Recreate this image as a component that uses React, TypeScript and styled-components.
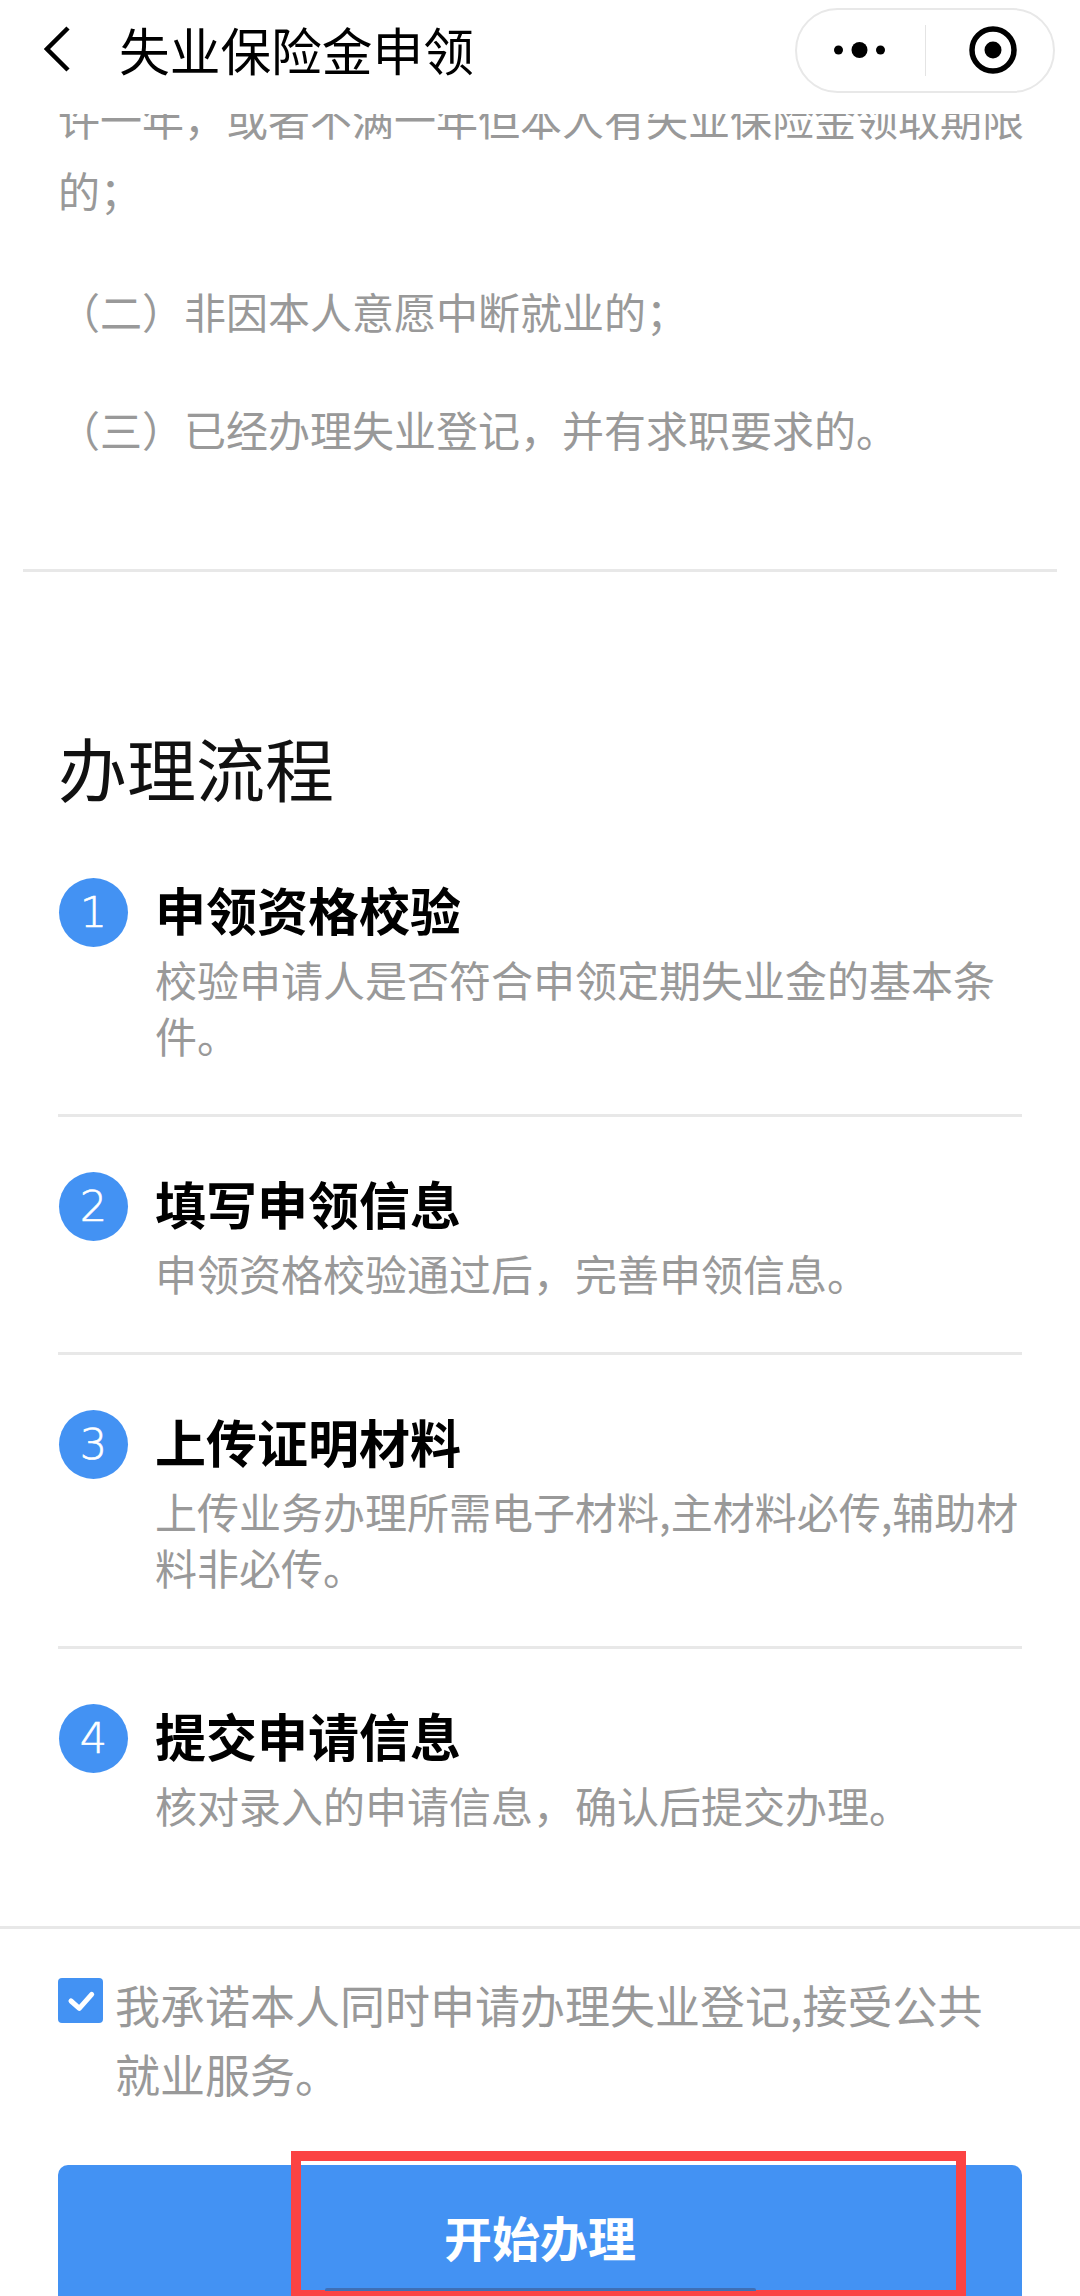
import React from "react"
import styled, { createGlobalStyle } from "styled-components"

const steps = [
  { title: "申领资格校验", desc: "校验申请人是否符合申领定期失业金的基本条件。" },
  { title: "填写申领信息", desc: "申领资格校验通过后，完善申领信息。" },
  { title: "上传证明材料", desc: "上传业务办理所需电子材料,主材料必传,辅助材料非必传。" },
  { title: "提交申请信息", desc: "核对录入的申请信息，确认后提交办理。" },
]

const GlobalStyle = createGlobalStyle`
  html, body {
    margin: 0;
    padding: 0;
    background: #fff;
  }
  body {
    font-family: "Noto Sans CJK SC", "Noto Sans", sans-serif;
  }
`

export default function App() {
  return (
    <S.Page>
      <GlobalStyle />
      <S.Header>
        <S.Back viewBox="0 0 30 50" aria-hidden>
          <path d="M24 3 L3 24 L24 45" />
        </S.Back>
        <S.Title>失业保险金申领</S.Title>
        <S.Capsule>
          <svg width="51" height="16" viewBox="0 0 51 16" aria-hidden>
            <circle cx="4.5" cy="8" r="4.5" fill="#000" />
            <circle cx="25.5" cy="8" r="8" fill="#000" />
            <circle cx="46.5" cy="8" r="4.5" fill="#000" />
          </svg>
          <S.CapsuleLine />
          <svg width="48" height="48" viewBox="0 0 48 48" aria-hidden>
            <circle cx="24" cy="24" r="21" fill="none" stroke="#000" strokeWidth="5.5" />
            <circle cx="24" cy="24" r="8.5" fill="#000" />
          </svg>
        </S.Capsule>
      </S.Header>

      <S.Scroller>
        <S.Notice>
          <S.Para $first>许一年，或者不满一年但本人有失业保险金领取期限的；</S.Para>
          <S.Para>（二）非因本人意愿中断就业的；</S.Para>
          <S.Para>（三）已经办理失业登记，并有求职要求的。</S.Para>
        </S.Notice>

        <S.Flow>
          <S.FlowTitle>办理流程</S.FlowTitle>
          {steps.map((step, i) => (
            <S.Step key={step.title} $last={i === steps.length - 1}>
              <S.Num>{i + 1}</S.Num>
              <S.StepText>
                <S.StepTitle>{step.title}</S.StepTitle>
                <S.StepDesc>{step.desc}</S.StepDesc>
              </S.StepText>
            </S.Step>
          ))}
        </S.Flow>

        <S.Footer>
          <S.Promise>
            <S.Check>
              <svg width="45" height="45" viewBox="0 0 45 45" aria-hidden>
                <path
                  d="M13 23 L21.3 30.3 L33.7 16.3"
                  fill="none"
                  stroke="#fff"
                  strokeWidth="5"
                  strokeLinecap="round"
                  strokeLinejoin="round"
                />
              </svg>
            </S.Check>
            <S.PromiseText>我承诺本人同时申请办理失业登记,接受公共就业服务。</S.PromiseText>
          </S.Promise>
          <S.Button>开始办理</S.Button>
        </S.Footer>
      </S.Scroller>

      <S.Highlight />
      <S.HomeBar />
    </S.Page>
  )
}

const S = {
  Page: styled.div`
    position: relative;
    width: 1080px;
    height: 2296px;
    overflow: hidden;
    background: #fff;
  `,
  Header: styled.header`
    display: flex;
    align-items: center;
    height: 114px;
    padding: 0 25px 14px 44px;
    box-sizing: border-box;
    background: #fff;
  `,
  Back: styled.svg`
    width: 30px;
    height: 50px;
    flex: none;
    fill: none;
    stroke: #000;
    stroke-width: 4.5;
  `,
  Title: styled.h1`
    flex: 1;
    margin: 0 0 3px 45px;
    font-size: 50.7px;
    line-height: 100px;
    font-weight: 400;
    color: #000;
  `,
  Capsule: styled.div`
    display: flex;
    align-items: center;
    width: 260px;
    height: 85px;
    padding-left: 37px;
    box-sizing: border-box;
    border: 2px solid #e8e8e8;
    border-radius: 43px;
  `,
  CapsuleLine: styled.span`
    width: 1px;
    height: 51px;
    margin: 0 43px 0 40px;
    background: #e4e4e4;
  `,
  Scroller: styled.main`
    height: 2182px;
    overflow: hidden;
  `,
  Notice: styled.section`
    margin: 0 23px;
    padding: 0 30px 104px 35px;
    border-bottom: 3px solid #e8e8e8;
  `,
  Para: styled.p<{ $first?: boolean }>`
    margin: ${(p) => (p.$first ? "-32px" : "46px")} 0 0;
    padding-bottom: ${(p) => (p.$first ? "3px" : "0")};
    font-size: 42px;
    line-height: 72px;
    color: #999;
  `,
  Flow: styled.section`
    padding: 139px 58px 0;
  `,
  FlowTitle: styled.h2`
    margin: 0;
    font-size: 69px;
    line-height: 112px;
    font-weight: 400;
    color: #111;
  `,
  Step: styled.div<{ $last?: boolean }>`
    display: flex;
    gap: 27px;
    padding: 44px 0 ${(p) => (p.$last ? "93px" : "51px")};
    border-bottom: ${(p) => (p.$last ? "none" : "3px solid #e8e8e8")};
  `,
  Num: styled.div`
    flex: none;
    width: 69px;
    height: 69px;
    margin: 11px 0 0 1px;
    border-radius: 50%;
    background: #4392f3;
    color: #fff;
    font-family: "DejaVu Sans Light", "DejaVu Sans", sans-serif;
    font-size: 43px;
    font-weight: 200;
    line-height: 69px;
    text-align: center;
    -webkit-text-stroke: 0.6px #fff;
  `,
  StepText: styled.div`
    flex: 1;
    min-width: 0;
  `,
  StepTitle: styled.div`
    font-size: 51px;
    line-height: 84px;
    font-weight: 700;
    color: #000;
  `,
  StepDesc: styled.div`
    font-size: 42px;
    line-height: 56px;
    color: #999;
  `,
  Footer: styled.footer`
    padding: 49px 58px 0;
    border-top: 3px solid #e8e8e8;
  `,
  Promise: styled.div`
    display: flex;
    gap: 12px;
  `,
  Check: styled.div`
    flex: none;
    width: 45px;
    height: 45px;
    border-radius: 4px;
    background: #4392f3;
  `,
  PromiseText: styled.div`
    flex: 1;
    min-width: 0;
    margin-top: -8px;
    font-size: 45px;
    line-height: 69px;
    color: #999;
  `,
  Button: styled.div`
    height: 200px;
    margin-top: 57px;
    padding-top: 38px;
    box-sizing: border-box;
    border-radius: 10px;
    background: #4392f3;
    color: #fff;
    font-size: 48px;
    font-weight: 700;
    line-height: 66px;
    text-align: center;
  `,
  Highlight: styled.div`
    position: absolute;
    left: 291px;
    top: 2151px;
    width: 675px;
    height: 145px;
    box-sizing: border-box;
    border: 10px solid #fb4343;
    border-bottom-width: 6px;
  `,
  HomeBar: styled.div`
    position: absolute;
    left: 325px;
    top: 2288px;
    width: 431px;
    height: 3px;
    border-radius: 2px 2px 0 0;
    background: #3f6fb5;
  `,
}
